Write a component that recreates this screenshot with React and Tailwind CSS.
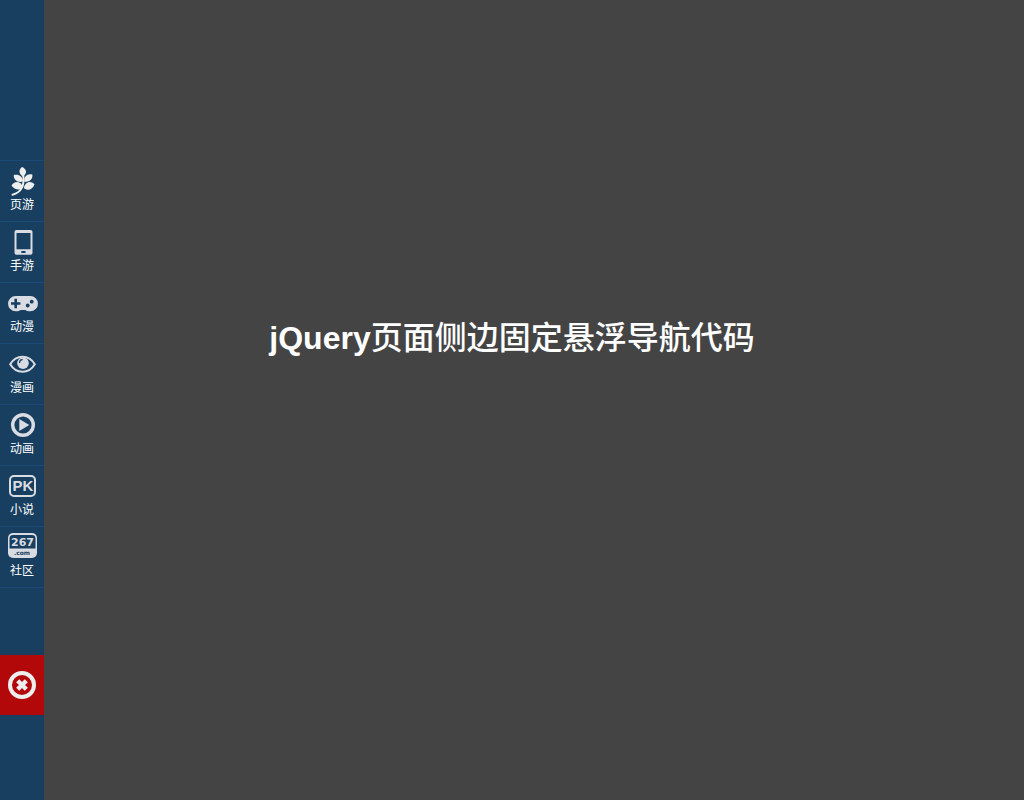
function LeafIcon() {
  return (
    <svg viewBox="0 0 32 30" className="w-8 h-[30px] text-[#eeeeee]" fill="currentColor" aria-hidden="true">
      <path d="M17 10.500C12.500 8 12.500 3.500 16 1c4.800 2 5.500 6.500 1 9.500z" />
      <path d="M17 15.500C11.500 17 7.500 14 7.800 9c4.800-1.200 9 1.200 9.200 6.500z" />
      <path d="M18.300 15.800c-.5-5.500 3-8.500 8-7.300 .8 4.800-3 7.800-8 7.300z" />
      <path d="M17 21c-2.500 4-8.500 3.200-11.500-1.500 3-5.500 9.500-4.500 11.500 1.500z" />
      <path d="M17.800 22c1.200-6 6.700-8 10.700-3.700-2 5.700-7 7-10.700 3.700z" />
      <path d="M17.200 9c1.500 10-.7 17-10.700 19.700" fill="none" stroke="currentColor" strokeWidth="2" strokeLinecap="round" />
    </svg>
  );
}

function PhoneIcon() {
  return (
    <svg viewBox="0 0 32 30" className="w-8 h-[30px] text-[#d9dce2]" fill="currentColor" aria-hidden="true">
      <path
        fillRule="evenodd"
        d="M10.500 3h14a2 2 0 0 1 2 2v20.700a2 2 0 0 1-2 2h-14a2 2 0 0 1-2-2V5a2 2 0 0 1 2-2zM10.500 6v16.300h14V6zM15.300 24v2h4.200v-2z"
      />
    </svg>
  );
}

function GamepadIcon() {
  return (
    <svg viewBox="0 0 32 30" className="w-8 h-[30px] text-[#d9dce2]" fill="currentColor" aria-hidden="true">
      <path d="M9.700 8h14.600a7.600 7.600 0 0 1 0 15.300c-2.500 0-3.800-.5-5-1.300h-4.600c-1.200.8-2.500 1.300-5 1.300a7.600 7.600 0 0 1 0-15.300z" />
      <path d="M9.700 10.800v9.400M5 15.500h9.400" stroke="#193f60" strokeWidth="2.600" />
      <circle cx="21.700" cy="17.500" r="1.900" fill="#193f60" />
      <circle cx="25.700" cy="13.700" r="1.900" fill="#193f60" />
    </svg>
  );
}

function EyeIcon() {
  return (
    <svg viewBox="0 0 32 30" className="w-8 h-[30px] text-[#d9dce2]" fill="currentColor" aria-hidden="true">
      <path
        d="M4.200 15.200C7 10.500 11.500 7.700 16.500 7.700S26 10.500 28.800 15.200c-2.800 4.700-7.300 7.500-12.300 7.500S7 19.900 4.200 15.200z"
        fill="none"
        stroke="currentColor"
        strokeWidth="2"
      />
      <circle cx="17" cy="14.200" r="5.800" />
      <path d="M13.600 13.500c0-1.500 1-2.700 2.600-2.900" fill="none" stroke="#193f60" strokeWidth="1.300" strokeLinecap="round" />
    </svg>
  );
}

function PlayIcon() {
  return (
    <svg viewBox="0 0 32 30" className="w-8 h-[30px] text-[#d9dce2]" fill="currentColor" aria-hidden="true">
      <circle cx="17" cy="15" r="10.300" fill="none" stroke="currentColor" strokeWidth="3.400" />
      <path d="M13.300 9v12l10-6z" />
    </svg>
  );
}

function PkIcon() {
  return (
    <svg viewBox="0 0 32 30" className="w-8 h-[30px] text-[#d9dce2]" fill="currentColor" aria-hidden="true">
      <rect x="4" y="5" width="25" height="20" rx="4" fill="none" stroke="currentColor" strokeWidth="2" />
      <text x="17" y="20" textAnchor="middle" className="font-['Liberation_Sans',sans-serif] text-[15px] font-bold">
        PK
      </text>
    </svg>
  );
}

function CommunityIcon() {
  return (
    <svg viewBox="0 0 32 30" className="w-8 h-[30px] text-[#d9dce2]" fill="currentColor" aria-hidden="true">
      <rect x="2" y="1" width="29" height="25" rx="5" />
      <path d="M7 3h19a3.500 3.500 0 0 1 3.500 3.500V16.500h-26V6.500A3.500 3.500 0 0 1 7 3z" fill="#193f60" />
      <text x="16.500" y="14" textAnchor="middle" className="font-['DejaVu_Sans',sans-serif] text-[11px] font-bold">
        267
      </text>
      <text x="16" y="23" textAnchor="middle" fill="#193f60" className="font-['DejaVu_Sans',sans-serif] text-[6px] font-bold">
        .com
      </text>
    </svg>
  );
}

function CloseIcon() {
  return (
    <svg viewBox="0 0 28 28" className="w-7 h-7 text-[#eeeeee]" fill="none" stroke="currentColor" aria-hidden="true">
      <circle cx="14" cy="14" r="12" strokeWidth="4" />
      <path d="M9.700 9.700l8.600 8.600M18.300 9.700l-8.600 8.600" strokeWidth="4.400" />
    </svg>
  );
}

const NAV_ITEMS = [
  { label: '页游', Icon: LeafIcon },
  { label: '手游', Icon: PhoneIcon },
  { label: '动漫', Icon: GamepadIcon },
  { label: '漫画', Icon: EyeIcon },
  { label: '动画', Icon: PlayIcon },
  { label: '小说', Icon: PkIcon },
  { label: '社区', Icon: CommunityIcon },
];

function Sidebar() {
  return (
    <aside className="fixed inset-y-0 left-0 w-11 pt-40 bg-[#193f60]">
      <nav>
        <ul className="border-b border-[#1c4a78]">
          {NAV_ITEMS.map(({ label, Icon }) => (
            <li key={label} className="border-t border-[#1c4a78]">
              <a href="#" className="flex flex-col items-center h-15 pt-[5px] text-xs leading-[18px] text-white hover:bg-[#1c4a78]">
                <Icon />
                {label}
              </a>
            </li>
          ))}
        </ul>
      </nav>
      <button type="button" aria-label="关闭" className="mt-[67px] flex items-center justify-center w-full h-15 bg-[#b3080a]">
        <CloseIcon />
      </button>
    </aside>
  );
}

export default function App() {
  return (
    <div className="min-h-screen bg-[#444444] font-['Liberation_Sans','Noto_Sans_CJK_SC',sans-serif]">
      <Sidebar />
      <main className="pt-80 text-center text-white">
        <h1 className="text-[32px] leading-9 font-bold">
          jQuery<span className="font-medium">页面侧边固定悬浮导航代码</span>
        </h1>
      </main>
    </div>
  );
}
